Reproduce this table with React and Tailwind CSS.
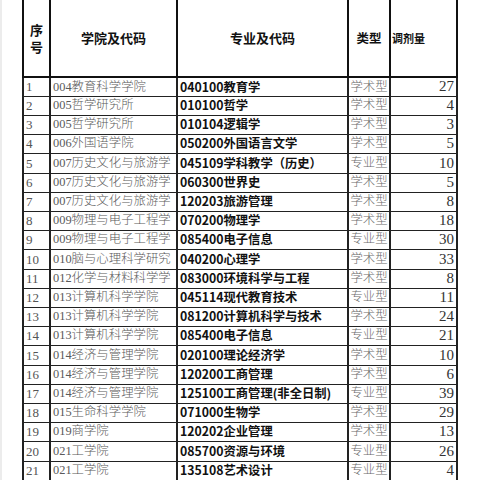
const rows = [
  ["1", "004教育科学学院", "040100教育学", "学术型", "27"],
  ["2", "005哲学研究所", "010100哲学", "学术型", "4"],
  ["3", "005哲学研究所", "010104逻辑学", "学术型", "3"],
  ["4", "006外国语学院", "050200外国语言文学", "学术型", "5"],
  ["5", "007历史文化与旅游学", "045109学科教学（历史）", "专业型", "10"],
  ["6", "007历史文化与旅游学", "060300世界史", "学术型", "5"],
  ["7", "007历史文化与旅游学", "120203旅游管理", "学术型", "8"],
  ["8", "009物理与电子工程学", "070200物理学", "学术型", "18"],
  ["9", "009物理与电子工程学", "085400电子信息", "专业型", "30"],
  ["10", "010脑与心理科学研究", "040200心理学", "学术型", "33"],
  ["11", "012化学与材料科学学", "083000环境科学与工程", "学术型", "8"],
  ["12", "013计算机科学学院", "045114现代教育技术", "专业型", "11"],
  ["13", "013计算机科学学院", "081200计算机科学与技术", "学术型", "24"],
  ["14", "013计算机科学学院", "085400电子信息", "专业型", "21"],
  ["15", "014经济与管理学院", "020100理论经济学", "学术型", "10"],
  ["16", "014经济与管理学院", "120200工商管理", "学术型", "6"],
  ["17", "014经济与管理学院", "125100工商管理(非全日制)", "专业型", "39"],
  ["18", "015生命科学学院", "071000生物学", "学术型", "29"],
  ["19", "019商学院", "120202企业管理", "学术型", "13"],
  ["20", "021工学院", "085700资源与环境", "专业型", "26"],
  ["21", "021工学院", "135108艺术设计", "专业型", "4"],
];

const serif = "font-['Liberation_Serif','Noto_Sans_CJK_SC',serif]";
const bold = "font-['Noto_Sans_CJK_SC','Liberation_Sans',sans-serif]";

export default function App() {
  return (
    <div className="w-[480px] h-[480px] bg-white overflow-hidden flex">
      <div className="w-[2px] h-full bg-[#ececec]"></div>
      <div className="pl-[20px]">
        <table className="table-fixed border-collapse">
          <colgroup>
            <col className="w-[27px]" />
            <col className="w-[127px]" />
            <col className="w-[171px]" />
            <col className="w-[42px]" />
            <col className="w-[67px]" />
          </colgroup>
          <thead>
            <tr className="h-[77px]">
              <th className={`border-x-2 border-b-2 border-[#111] ${bold} text-[13px] font-bold text-[#111] text-center p-0`}>
                <div className="flex flex-col items-center gap-[5px] leading-[12px]">
                  <span>序</span>
                  <span>号</span>
                </div>
              </th>
              <th className={`border-x-2 border-b-2 border-[#111] ${bold} text-[13px] font-bold text-[#111] text-center`}>
                学院及代码
              </th>
              <th className={`border-x-2 border-b-2 border-[#111] ${bold} text-[13px] font-bold text-[#111] text-center`}>
                专业及代码
              </th>
              <th className={`border-x-2 border-b-2 border-[#111] ${bold} text-[12.5px] font-bold text-[#111] text-center`}>
                类型
              </th>
              <th className={`border-x-2 border-b-2 border-[#111] ${bold} text-[11px] font-bold text-[#111] text-left pl-[1px] whitespace-nowrap`}>
                调剂量
              </th>
            </tr>
          </thead>
          <tbody>
            {rows.map((r, i) => (
              <tr key={i} className={i % 10 === 4 || i % 10 === 9 ? "h-[20px]" : "h-[19px]"}>
                <td className={`border-x-2 border-y border-[#222] ${serif} text-[13px] text-[#555] pl-[2px] p-0 leading-none whitespace-nowrap`}>
                  {r[0]}
                </td>
                <td className={`border-x-2 border-y border-[#222] ${serif} font-light text-[12.4px] text-[#5a5a5a] pl-[2px] p-0 leading-none whitespace-nowrap overflow-hidden`}>
                  {r[1]}
                </td>
                <td className={`border-x-2 border-y border-[#222] ${bold} font-bold text-[12.3px] text-[#111] pl-[2px] p-0 leading-none whitespace-nowrap overflow-hidden`}>
                  {r[2]}
                </td>
                <td className={`border-x-2 border-y border-[#222] ${serif} font-light text-[12.4px] text-[#6a6a6a] text-center p-0 leading-none whitespace-nowrap`}>
                  {r[3]}
                </td>
                <td className={`border-x-2 border-y border-[#222] ${serif} text-[15px] text-[#333] text-right pr-[2px] p-0 leading-none whitespace-nowrap`}>
                  {r[4]}
                </td>
              </tr>
            ))}
          </tbody>
        </table>
      </div>
    </div>
  );
}
